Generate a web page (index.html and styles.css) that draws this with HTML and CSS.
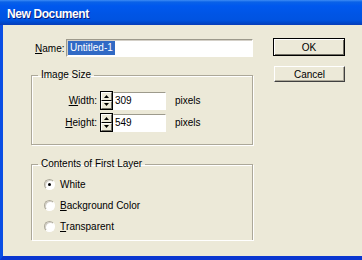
FILE: index.html
```html
<!DOCTYPE html>
<html lang="en">
<head>
    <meta charset="UTF-8">
    <meta name="viewport" content="width=device-width, initial-scale=1.0">
    <title>New Document</title>
    <link rel="stylesheet" href="styles.css">
</head>
<body>
    <div class="window">
        <div class="titlebar"><span class="title">New Document</span></div>
        <div class="client">
            <div class="main">
                <div class="name-row">
                    <label class="name-label"><u>N</u>ame:</label>
                    <div class="textbox"><span class="sel">Untitled-1</span></div>
                </div>

                <fieldset class="group size">
                    <legend>Image Size</legend>
                    <div class="group-body">
                        <div class="dim-row">
                            <label class="dim-label"><u>W</u>idth:</label>
                            <div class="spinner">
                                <span class="spin up"><svg width="5" height="3" viewBox="0 0 5 3"><path d="M2.5 0L5 3H0z" fill="#000"/></svg></span>
                                <span class="spin down"><svg width="5" height="3" viewBox="0 0 5 3"><path d="M0 0H5L2.5 3z" fill="#000"/></svg></span>
                            </div>
                            <div class="numbox">309</div>
                            <span class="unit">pixels</span>
                        </div>
                        <div class="dim-row">
                            <label class="dim-label"><u>H</u>eight:</label>
                            <div class="spinner">
                                <span class="spin up"><svg width="5" height="3" viewBox="0 0 5 3"><path d="M2.5 0L5 3H0z" fill="#000"/></svg></span>
                                <span class="spin down"><svg width="5" height="3" viewBox="0 0 5 3"><path d="M0 0H5L2.5 3z" fill="#000"/></svg></span>
                            </div>
                            <div class="numbox">549</div>
                            <span class="unit">pixels</span>
                        </div>
                    </div>
                </fieldset>

                <fieldset class="group layer">
                    <legend>Contents of First Layer</legend>
                    <div class="group-body">
                        <div class="radio-row"><span class="radio checked"></span>White</div>
                        <div class="radio-row"><span class="radio"></span><u>B</u>ackground Color</div>
                        <div class="radio-row"><span class="radio"></span><u>T</u>ransparent</div>
                    </div>
                </fieldset>
            </div>

            <div class="buttons">
                <button class="btn default">OK</button>
                <button class="btn">Cancel</button>
            </div>
        </div>
    </div>
</body>
</html>
```

FILE: styles.css
```css
body {
    margin: 0;
    font-family: "Liberation Sans", Arial, sans-serif;
    font-size: 10px;
    color: #000;
    overflow: hidden;
}
.window {
    width: 362px;
    height: 260px;
    display: flex;
    flex-direction: column;
    background-color: #ece9d8;
}
.titlebar {
    height: 25px;
    flex: none;
    box-sizing: border-box;
    display: flex;
    align-items: center;
    padding: 2px 0 0 7px;
    background: linear-gradient(#3d8cf5 0, #0a62e8 2px, #0058ee 6px, #0055e5 14px, #0053e1 20px, #0046c8 23px, #0a3cb8 25px);
}
.title {
    color: #fff;
    font-weight: bold;
    font-size: 12px;
    letter-spacing: -0.4px;
    text-shadow: 1px 1px 0 #0a1c7a;
}
.client {
    flex: 1;
    display: flex;
    border-left: 3px solid #0a4ee4;
    border-bottom: 4px solid #0a36d0;
}
.main {
    width: 222px;
    margin-left: 28px;
    padding-top: 14px;
}
.name-row {
    display: flex;
    align-items: center;
    height: 18px;
}
.name-label {
    width: 35px;
    padding-left: 4px;
    box-sizing: border-box;
}
.textbox {
    flex: 1;
    height: 18px;
    box-sizing: border-box;
    background-color: #fff;
    border: 1px solid;
    border-color: #9d9a8c #fff #fff #9d9a8c;
    box-shadow: inset 1px 1px 0 #d4d0c8;
    padding: 1px 0 0 1px;
}
.sel {
    display: inline-block;
    height: 14px;
    line-height: 14px;
    padding: 0 2px;
    background-color: #316ac5;
    color: #fff;
}
.group {
    margin: 0;
    padding: 0;
    min-width: 0;
    border: 1px solid #aca899;
    box-shadow: inset 1px 1px 0 #fff, 1px 1px 0 #fff;
}
.group legend {
    margin-left: 6px;
    padding: 0 3px;
    line-height: 12px;
}
.size {
    margin-top: 12px;
}
.size .group-body {
    padding: 10px 0 12px;
}
.dim-row {
    display: flex;
    align-items: center;
    height: 19px;
}
.dim-row + .dim-row {
    margin-top: 3px;
}
.dim-label {
    width: 65px;
    text-align: right;
}
.spinner {
    width: 13px;
    height: 19px;
    margin-left: 3px;
    box-sizing: border-box;
    border: 1px solid #000;
    display: flex;
    flex-direction: column;
}
.spin {
    flex: 1;
    display: flex;
    align-items: center;
    justify-content: center;
    background-color: #ece9d8;
    border: 1px solid;
    border-color: #fff #716f64 #716f64 #fff;
}
.spin.up {
    border-bottom-color: #000;
}
.numbox {
    width: 53px;
    height: 18px;
    box-sizing: border-box;
    background-color: #fff;
    border: 1px solid;
    border-color: #9d9a8c #fff #fff #fff;
    padding-left: 1px;
    line-height: 16px;
}
.unit {
    margin-left: 9px;
}
.layer {
    margin-top: 13px;
    border-bottom-width: 0;
}
.layer .group-body {
    padding: 4px 0 3px 12px;
}
.radio-row {
    display: flex;
    align-items: center;
    height: 21px;
}
.radio {
    width: 11px;
    height: 11px;
    box-sizing: border-box;
    margin-right: 5px;
    border-radius: 50%;
    border: 1px solid;
    border-color: #aca899 #fff #fff #aca899;
    background-color: #fff;
    box-shadow: inset 1px 1px 0 #d4d0c8;
    display: flex;
    align-items: center;
    justify-content: center;
}
.radio.checked::after {
    content: "";
    width: 3px;
    height: 3px;
    border-radius: 50%;
    background-color: #000;
}
.buttons {
    margin-left: 20px;
    padding-top: 13px;
    display: flex;
    flex-direction: column;
    align-items: flex-start;
}
.btn {
    font-family: "Liberation Sans", Arial, sans-serif;
    font-size: 10px;
    color: #000;
    background-color: #ece9d8;
    padding: 0;
    width: 71px;
    height: 16px;
    margin-left: 1px;
    border: 1px solid;
    border-color: #fff #404040 #404040 #fff;
    box-shadow: inset -1px -1px 0 #aca899;
}
.btn.default {
    width: 72px;
    height: 18px;
    margin-left: 0;
    border-color: #000;
    box-shadow: inset 1px 1px 0 #fff, inset -1px -1px 0 #716f64;
}
.btn + .btn {
    margin-top: 10px;
}
```
